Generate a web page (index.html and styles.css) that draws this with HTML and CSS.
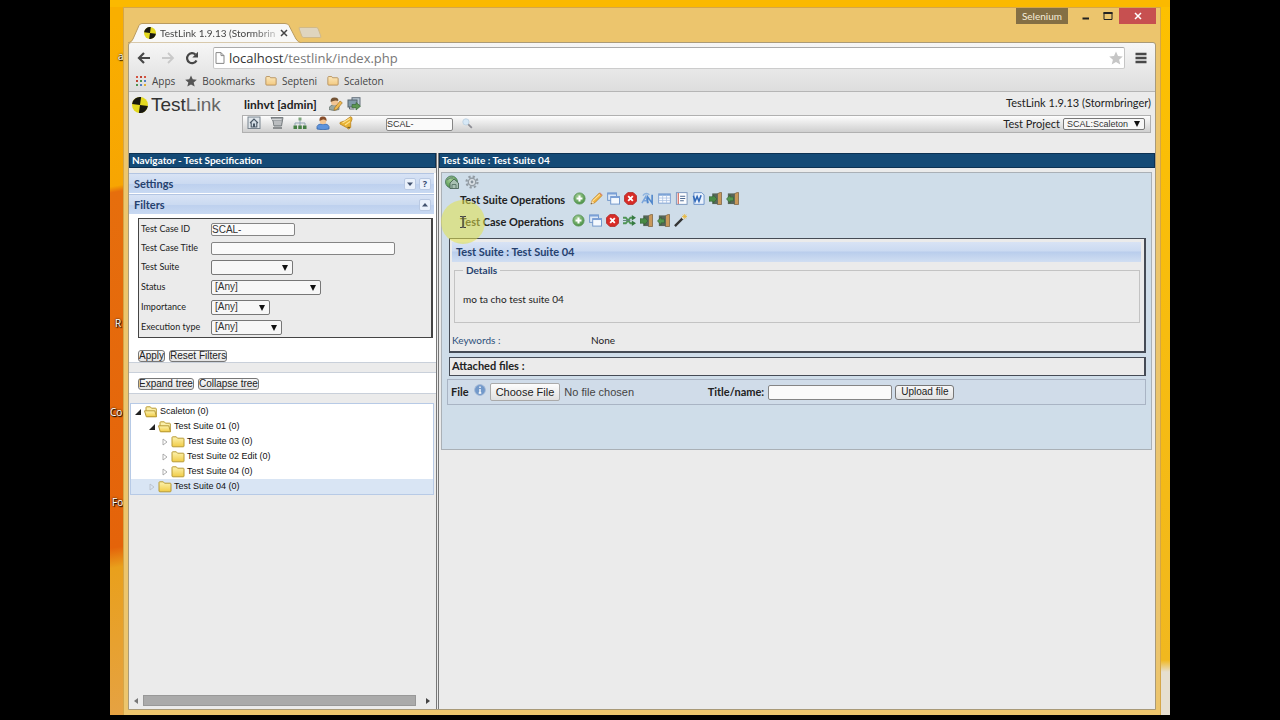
FILE: index.html
```html
<!DOCTYPE html>
<html lang="en">
<head>
<meta charset="utf-8">
<title>TestLink 1.9.13 (Stormbringer)</title>
<link rel="stylesheet" href="styles.css">
</head>
<body>
<svg class="sprite" aria-hidden="true">
  <defs>
    <radialGradient id="g-green" cx=".4" cy=".3" r=".8"><stop offset="0" stop-color="#a5cf98"/><stop offset="1" stop-color="#3f8a3c"/></radialGradient>
    <linearGradient id="g-fold" x1="0" y1="0" x2="0" y2="1"><stop offset="0" stop-color="#fdf3b0"/><stop offset="1" stop-color="#f0cb45"/></linearGradient>
    <linearGradient id="g-book" x1="0" y1="0" x2="0" y2="1"><stop offset="0" stop-color="#fbe7ba"/><stop offset="1" stop-color="#f3c981"/></linearGradient>
  </defs>
  <symbol id="mark" viewBox="0 0 16 16"><circle cx="8" cy="8" r="8" fill="#e3d820"/><path d="M8 8V0A8 8 0 0 0 0 8zM8 8v8a8 8 0 0 0 8-8z" fill="#171710" transform="rotate(8 8 8)"/></symbol>
  <symbol id="add" viewBox="0 0 14 14"><circle cx="7" cy="7" r="6" fill="url(#g-green)" stroke="#5d9658"/><path d="M7 3.800v6.400M3.800 7h6.400" stroke="#fff" stroke-width="2.200"/></symbol>
  <symbol id="pencil" viewBox="0 0 14 14"><path d="M1 13l1.500-4.500L10 1.200l2.800 2.800L5.300 11.500z" fill="#f0b440" stroke="#b97c25" stroke-width=".8"/><path d="M3 9.500L10.600 2.500" stroke="#ffe39a" stroke-width="1.200"/><path d="M1 13l1.200-3.500 2.300 2.300z" fill="#f6dfb8"/><path d="M1 13l.5-1.500 1 1z" fill="#333"/><path d="M10 1.200l1-.7 2.700 2.700-.9.800z" fill="#d98874"/></symbol>
  <symbol id="copy" viewBox="0 0 14 14"><rect x=".7" y="1" width="9.500" height="8" fill="#dce8f7" stroke="#6d94ca"/><path d="M.5 1.800h10" stroke="#7ba0d6" stroke-width="1.800"/><rect x="4" y="5" width="9.500" height="8" fill="#f5f9fe" stroke="#6d94ca"/><path d="M3.800 5.600h10" stroke="#7ba0d6" stroke-width="1.800"/></symbol>
  <symbol id="delete" viewBox="0 0 14 14"><path d="M4 .7h6L13.300 4v6L10 13.300H4L.7 10V4z" fill="#d92c27" stroke="#b0231e"/><path d="M4.500 4.500l5 5m0-5l-5 5" stroke="#fff" stroke-width="2"/></symbol>
  <symbol id="move" viewBox="0 0 14 14"><path d="M1 12l4-7 3 7M2.500 9.500h4" fill="none" stroke="#7aa5dc" stroke-width="1.600"/><path d="M7 12V5l5 7V3" fill="none" stroke="#4f86cb" stroke-width="1.700"/><path d="M2 4c2-3 5-3 7-1" fill="none" stroke="#8db3df" stroke-width="1.500"/></symbol>
  <symbol id="table" viewBox="0 0 14 14"><rect x=".7" y="2" width="12.600" height="10" fill="#f8fbff" stroke="#7c9fcf"/><path d="M.7 3h12.600" stroke="#7ca3d6" stroke-width="2"/><path d="M5 3v9M9.200 3v9M1 6.500h12M1 9.200h12" stroke="#a7c0e2" stroke-width=".8"/></symbol>
  <symbol id="report" viewBox="0 0 14 14"><rect x="1.500" y=".7" width="11.500" height="12.600" fill="#fcfdff" stroke="#7893bb"/><path d="M3.500 1v12" stroke="#d1695e" stroke-width="1.300"/><path d="M5.500 4.500h5.500M5.500 7h5.500M5.500 9.500h4" stroke="#506b92" stroke-width="1.100"/></symbol>
  <symbol id="word" viewBox="0 0 14 14"><path d="M2 .7h8.500L13 3.200v10.100H2z" fill="#eaf2fd" stroke="#6991c8"/><path d="M1.500 4l1.800 6L5.500 5l2 5 2.300-6.500" fill="none" stroke="#3269b8" stroke-width="1.700"/></symbol>
  <symbol id="import" viewBox="0 0 14 14"><path d="M9 2l3-1.500h1.500v13H9z" fill="#c9985a" stroke="#78603f" stroke-width=".8"/><rect x="3.500" y="1.500" width="6" height="11.500" fill="#58655a"/><path d="M0 5h4.500V3l4 4.500-4 4.500v-2H0z" fill="#498a45" stroke="#315d32" stroke-width=".6"/></symbol>
  <symbol id="export" viewBox="0 0 14 14"><path d="M9 2l3-1.500h1.500v13H9z" fill="#c9985a" stroke="#78603f" stroke-width=".8"/><rect x="2" y="1.500" width="7.500" height="11.500" fill="#58655a"/><path d="M8 5.500H4.500V3.200L.5 7.500l4 4.300V9.500H8z" fill="#539750" stroke="#315d32" stroke-width=".6"/></symbol>
  <symbol id="shuffle" viewBox="0 0 14 14"><path d="M0 4h3l5 6h3M0 10h3l5-6h3" fill="none" stroke="#4f9556" stroke-width="2"/><path d="M9.500 1L14 4l-4.500 3zM9.500 7l4.500 3-4.500 3z" fill="#367a42"/><path d="M0 7h8" stroke="#5e7e76"/></symbol>
  <symbol id="wand" viewBox="0 0 14 14"><path d="M1 13L9.500 4.500" stroke="#343434" stroke-width="2.500"/><path d="M9 5l2-2" stroke="#eee" stroke-width="2.200"/><path d="M11.500 0v5.500M8.700 2.700h5.300M9.500.7l4 4m0-4l-4 4" stroke="#e9b83a" stroke-width=".9"/></symbol>
  <symbol id="print" viewBox="0 0 14 14"><circle cx="6.500" cy="7" r="6" fill="url(#g-green)" stroke="#57806a"/><path d="M5 8l4-4 4.500 4v5.500H5z" fill="#a9c1b3" stroke="#3d584b" stroke-width=".8"/><path d="M7 13V9.500h4V13M2 5q3-3 6-2" fill="none" stroke="#607c70"/></symbol>
  <symbol id="gear" viewBox="0 0 14 14"><circle cx="7" cy="7" r="5.500" fill="none" stroke="#929ba3" stroke-width="2.200" stroke-dasharray="2.200 2.120"/><circle cx="7" cy="7" r="3.700" fill="#dbe1e6" stroke="#949da5" stroke-width="1.400"/><circle cx="7" cy="7" r="1.400" fill="#87929c"/></symbol>
  <symbol id="home" viewBox="0 0 14 14"><rect x="1" y="1" width="12" height="11.500" fill="#dfe5ea" stroke="#79848e"/><path d="M3 7l4-4 4 4M4.200 6.500V11h5.600V6.500" fill="#d1dce5" stroke="#4a5866" stroke-width="1.100"/><rect x="6" y="7.500" width="2" height="3.500" fill="#4a5866"/></symbol>
  <symbol id="spec" viewBox="0 0 14 14"><path d="M1 1.500h12L11.500 10H4L3 5z" fill="#a2a6a9" stroke="#7b8083"/><path d="M1.500 3.500h10M4 6h7.500M4 8h7" stroke="#dfe1e2" stroke-width=".8"/><path d="M3 12h9" stroke="#777b7e" stroke-width="1.600"/></symbol>
  <symbol id="tree" viewBox="0 0 14 14"><path d="M7 4v3M2 9.500V7h10v2.500M7 7v3" fill="none" stroke="#91a3b3"/><rect x="5.500" y="1.500" width="3" height="3" fill="#7fa67d"/><path d="M.5 9.500h3.500V13H.5zM5.300 9.500h3.500V13H5.300zM10 9.500h3.500V13H10z" fill="#457f43"/></symbol>
  <symbol id="user" viewBox="0 0 14 14"><path d="M1 13V10.500Q2 8 5 8h4q3 0 4 2.500V13q-6 1.500-12 0z" fill="#5d93dc" stroke="#3565aa" stroke-width=".8"/><circle cx="7" cy="5" r="3.300" fill="#f3c592"/><path d="M3.500 5Q3 .5 7 .6t3.500 4.400Q9 3 7 3.500T3.500 5z" fill="#874d2b"/></symbol>
  <symbol id="broom" viewBox="0 0 14 14"><path d="M11.500.7Q13.500 1 13 3.500l-1.300 3v5L9.500 13l-2-1.500L1 8V6.500L5.500 5z" fill="#e8b233" stroke="#b98322" stroke-width=".8"/><path d="M3.500 7L11 2.500M6 9l5-3.500" stroke="#ffe28d" stroke-width="1.200"/><path d="M8.500 11.500h2.500" stroke="#80601f" stroke-width="1.300"/></symbol>
  <symbol id="profile" viewBox="0 0 14 14"><path d="M0 12q1-5 6-4l4 1v3.500q-5 2-10 0z" fill="#9aa8a0" stroke="#636f68" stroke-width=".7"/><circle cx="5.500" cy="5" r="3.500" fill="#f2c593"/><path d="M1.700 5Q1 .5 5.500.5T9.300 4Q6 2.500 1.700 5z" fill="#745436"/><path d="M5.500 11l5.500-7 2.300 1.800-5.500 6.700-2.800.8z" fill="#efb94e" stroke="#a57326" stroke-width=".7"/></symbol>
  <symbol id="logout" viewBox="0 0 14 14"><rect x="5" y=".7" width="8" height="7.500" fill="#b7c6d1" stroke="#65717c"/><rect x="1" y="3" width="9" height="7" fill="#829bab" stroke="#54636c"/><path d="M2.500 10v2h5" fill="none" stroke="#5e6b74"/><path d="M5 7.500h4V5.500l4.500 3.700L9 13v-2.300H5z" fill="#5c9751" stroke="#39683a" stroke-width=".7"/></symbol>
  <symbol id="lens" viewBox="0 0 14 14"><circle cx="5" cy="5" r="4" fill="#d7e8f6" stroke="#bacedf"/><path d="M8 8l4.500 4.500" stroke="#8d8d94" stroke-width="2.200"/></symbol>
  <symbol id="info" viewBox="0 0 14 14"><circle cx="7" cy="7" r="6.300" fill="#7299ca" stroke="#a4b9d6"/><path d="M7 3v1.600M7 5.800v4.700M5.500 10.500h3" stroke="#fff" stroke-width="1.600"/></symbol>
  <symbol id="folder" viewBox="0 0 14 12"><path d="M1 3V1.500Q1 .8 1.800.8h3.500L6.500 2.200h5.700q.8 0 .8.800v7q0 .8-.8.800H2Q1 10.800 1 10z" fill="url(#g-fold)" stroke="#b89a35"/></symbol>
  <symbol id="folder-open" viewBox="0 0 14 12"><path d="M2 8V1.500Q2 .8 2.800.8h3.500L7.500 2.200h4q.8 0 .8.800v7.500H3z" fill="#fbefaa" stroke="#b89a35"/><path d="M.5 4.800h10.300l1.700 6H2.300z" fill="url(#g-fold)" stroke="#b89a35"/></symbol>
  <symbol id="bm-folder" viewBox="0 0 14 12"><path d="M1 2Q1 .8 2 .8h3.500l1 1.400H12q1 0 1 1v6.600q0 1-1 1H2q-1 0-1-1z" fill="url(#g-book)" stroke="#b28b55"/></symbol>
  <symbol id="star" viewBox="0 0 14 14"><path d="M7 .5l2 4.600 4.800.4-3.700 3.200 1.200 4.800L7 11l-4.300 2.500 1.200-4.800L.2 5.500 5 5.100z"/></symbol>
</svg>

<div class="desktop">
  <div class="desk-icons" aria-hidden="true">
    <span class="d1">a</span><span class="d2">R</span><span class="d3">Co</span><span class="d4">Fo</span>
  </div>
  <div class="window">
    <div class="titlebar">
      <div class="tab">
        <svg class="tab-shape" viewBox="0 0 174 20" preserveAspectRatio="none"><path d="M0 20Q4 19 5 16L11 2.500Q12 .5 14 .5H157Q160 .5 161 2.500L168 16Q170 19.500 174 20z" fill="#f8f8f7" stroke="#b99b60"/></svg>
        <svg class="i12"><use href="#mark"/></svg>
        <span class="tab-title">TestLink 1.9.13 (Stormbrin</span>
        <button class="plain close" aria-label="Close tab"><svg viewBox="0 0 8 8"><path d="M1 1l6 6m0-6L1 7" stroke="#444" stroke-width="1.500"/></svg></button>
      </div>
      <button class="plain newtab" aria-label="New tab"></button>
      <div class="controls">
        <button class="plain profile">Selenium</button>
        <button class="plain ctl" aria-label="Minimize"><svg viewBox="0 0 10 10"><path d="M1.500 7.500h6.500" stroke="#222" stroke-width="2"/></svg></button>
        <button class="plain ctl" aria-label="Maximize"><svg viewBox="0 0 10 10"><path d="M1 1.500h8v7H1z" fill="none" stroke="#222"/><path d="M.5 2h9" stroke="#222" stroke-width="2"/></svg></button>
        <button class="plain ctl exit" aria-label="Close"><svg viewBox="0 0 10 10"><path d="M2 2l6 6m0-6L2 8" stroke="#fff" stroke-width="1.500"/></svg></button>
      </div>
    </div>

    <div class="browser">
      <div class="addressbar">
        <button class="plain nav" aria-label="Back"><svg viewBox="0 0 14 14"><path d="M13 7H2.500M7 2L2 7l5 5" fill="none" stroke="#474747" stroke-width="2.200"/></svg></button>
        <button class="plain nav" aria-label="Forward"><svg viewBox="0 0 14 14"><path d="M1 7h10.500M7 2l5 5-5 5" fill="none" stroke="#c9c9c9" stroke-width="1.800"/></svg></button>
        <button class="plain nav" aria-label="Reload"><svg viewBox="0 0 14 14"><path d="M11.500 9.500A5 5 0 1 1 10.500 3.500" fill="none" stroke="#474747" stroke-width="2.200"/><path d="M13 .8v5.700H7.300z" fill="#474747"/></svg></button>
        <div class="url">
          <svg class="i12" viewBox="0 0 12 12"><path d="M2 .6h5l3 3v7.800H2zM7 .6v3h3" fill="#fff" stroke="#888"/></svg>
          <span class="url-text">localhost<span>/testlink/index.php</span></span>
          <button class="plain fav" aria-label="Bookmark"><svg fill="#c6c6c6"><use href="#star"/></svg></button>
        </div>
        <button class="plain menu" aria-label="Menu"><svg viewBox="0 0 12 12"><path d="M.5 2h11M.5 6h11M.5 10h11" stroke="#484848" stroke-width="2.400"/></svg></button>
      </div>
      <nav class="bookmarks">
        <a href="#"><svg class="i12" viewBox="0 0 12 12"><g><path d="M1 1h2v2H1zM9 1h2v2H9z" fill="#d5523f"/><path d="M5 1h2v2H5zM1 5h2v2H1z" fill="#bd4433"/><path d="M5 5h2v2H5zM1 9h2v2H1z" fill="#4f9350"/><path d="M9 5h2v2H9zM5 9h2v2H5z" fill="#527dc6"/><path d="M9 9h2v2H9z" fill="#dfae33"/></g></svg>Apps</a>
        <a href="#"><svg class="i12" fill="#555"><use href="#star"/></svg>Bookmarks</a>
        <a href="#"><svg class="i12"><use href="#bm-folder"/></svg>Septeni</a>
        <a href="#"><svg class="i12"><use href="#bm-folder"/></svg>Scaleton</a>
      </nav>

      <div class="page">
        <header class="top">
          <a class="logo" href="#"><svg><use href="#mark"/></svg><span>Test<i>Link</i></span></a>
          <div class="top-main">
            <div class="userline">
              <b>linhvt [admin]</b>
              <button class="plain ico" aria-label="My settings"><svg><use href="#profile"/></svg></button>
              <button class="plain ico" aria-label="Logout"><svg><use href="#logout"/></svg></button>
              <span class="version">TestLink 1.9.13 (Stormbringer)</span>
            </div>
            <div class="menubar">
              <button class="plain ico" aria-label="Home"><svg><use href="#home"/></svg></button>
              <button class="plain ico" aria-label="Specification"><svg><use href="#spec"/></svg></button>
              <button class="plain ico" aria-label="Execute"><svg><use href="#tree"/></svg></button>
              <button class="plain ico" aria-label="Users"><svg><use href="#user"/></svg></button>
              <button class="plain ico" aria-label="Events"><svg><use href="#broom"/></svg></button>
              <input class="field jump" type="text" value="SCAL-" aria-label="Go to test case">
              <button class="plain ico find" aria-label="Search"><svg><use href="#lens"/></svg></button>
              <label class="project-label" for="project">Test Project</label>
              <span class="drop project"><select id="project"><option>SCAL:Scaleton</option></select></span>
            </div>
          </div>
        </header>

        <div class="frames">
          <aside class="left">
            <h1 class="frame-title">Navigator - Test Specification</h1>
            <div class="nav-panels">
              <div class="bar"><h2>Settings</h2><button class="tool" aria-label="Expand settings"><svg viewBox="0 0 8 8"><path d="M1 2.500h6L4 6z" fill="#42526f"/></svg></button><button class="tool" aria-label="Help">?</button></div>
              <div class="bar"><h2>Filters</h2><button class="tool" aria-label="Collapse filters"><svg viewBox="0 0 8 8"><path d="M1 5.500h6L4 2z" fill="#42526f"/></svg></button></div>
              <form class="filters" onsubmit="return false">
                <div class="filter-grid">
                  <label for="tcid">Test Case ID</label><input id="tcid" class="field w-id" type="text" value="SCAL-">
                  <label for="tctitle">Test Case Title</label><input id="tctitle" class="field w-title" type="text">
                  <label for="suite">Test Suite</label><span class="drop w-suite"><select id="suite"><option></option></select></span>
                  <label for="status">Status</label><span class="drop w-status"><select id="status"><option>[Any]</option></select></span>
                  <label for="imp">Importance</label><span class="drop w-imp"><select id="imp"><option>[Any]</option></select></span>
                  <label for="exec">Execution type</label><span class="drop w-exec"><select id="exec"><option>[Any]</option></select></span>
                </div>
                <div class="btns"><button class="btn">Apply</button><button class="btn">Reset Filters</button></div>
              </form>
            </div>
            <div class="treebtns btns"><button class="btn">Expand tree</button><button class="btn">Collapse tree</button></div>
            <ul class="treelist">
              <li class="l0"><svg class="arrow" viewBox="0 0 8 8"><path d="M7 1v6H1z" fill="#222"/></svg><svg class="fold"><use href="#folder-open"/></svg>Scaleton (0)</li>
              <li class="l1"><svg class="arrow" viewBox="0 0 8 8"><path d="M7 1v6H1z" fill="#222"/></svg><svg class="fold"><use href="#folder-open"/></svg>Test Suite 01 (0)</li>
              <li class="l2"><svg class="arrow" viewBox="0 0 8 8"><path d="M2 1l4 3-4 3z" fill="none" stroke="#999" stroke-width=".8"/></svg><svg class="fold"><use href="#folder"/></svg>Test Suite 03 (0)</li>
              <li class="l2"><svg class="arrow" viewBox="0 0 8 8"><path d="M2 1l4 3-4 3z" fill="none" stroke="#999" stroke-width=".8"/></svg><svg class="fold"><use href="#folder"/></svg>Test Suite 02 Edit (0)</li>
              <li class="l2"><svg class="arrow" viewBox="0 0 8 8"><path d="M2 1l4 3-4 3z" fill="none" stroke="#999" stroke-width=".8"/></svg><svg class="fold"><use href="#folder"/></svg>Test Suite 04 (0)</li>
              <li class="l1 selected"><svg class="arrow" viewBox="0 0 8 8"><path d="M2 1l4 3-4 3z" fill="none" stroke="#b5bcc6" stroke-width=".8"/></svg><svg class="fold"><use href="#folder"/></svg>Test Suite 04 (0)</li>
            </ul>
            <div class="hscroll"><svg viewBox="0 0 8 8"><path d="M6 1v6L2 4z" fill="#777"/></svg><div class="thumb"></div><svg viewBox="0 0 8 8"><path d="M2 1v6l4-3z" fill="#444"/></svg></div>
          </aside>

          <main class="right">
            <h1 class="frame-title">Test Suite : Test Suite 04</h1>
            <div class="work">
              <div class="quick">
                <button class="plain ico" aria-label="Print view"><svg><use href="#print"/></svg></button>
                <button class="plain ico" aria-label="Actions"><svg><use href="#gear"/></svg></button>
              </div>
              <div class="ops">
                <b>Test Suite Operations</b>
                <button class="plain ico" aria-label="Create"><svg><use href="#add"/></svg></button>
                <button class="plain ico" aria-label="Edit"><svg><use href="#pencil"/></svg></button>
                <button class="plain ico" aria-label="Move or copy"><svg><use href="#copy"/></svg></button>
                <button class="plain ico" aria-label="Delete"><svg><use href="#delete"/></svg></button>
                <button class="plain ico" aria-label="Reorder"><svg><use href="#move"/></svg></button>
                <button class="plain ico" aria-label="Table"><svg><use href="#table"/></svg></button>
                <button class="plain ico" aria-label="Report"><svg><use href="#report"/></svg></button>
                <button class="plain ico" aria-label="Word document"><svg><use href="#word"/></svg></button>
                <button class="plain ico" aria-label="Import"><svg><use href="#import"/></svg></button>
                <button class="plain ico" aria-label="Export"><svg><use href="#export"/></svg></button>
              </div>
              <div class="ops">
                <b>Test Case Operations</b>
                <button class="plain ico" aria-label="Create"><svg><use href="#add"/></svg></button>
                <button class="plain ico" aria-label="Move or copy"><svg><use href="#copy"/></svg></button>
                <button class="plain ico" aria-label="Delete"><svg><use href="#delete"/></svg></button>
                <button class="plain ico" aria-label="Reorder"><svg><use href="#shuffle"/></svg></button>
                <button class="plain ico" aria-label="Import"><svg><use href="#import"/></svg></button>
                <button class="plain ico" aria-label="Export"><svg><use href="#export"/></svg></button>
                <button class="plain ico" aria-label="Create from issue"><svg><use href="#wand"/></svg></button>
                <span class="pointer"><svg viewBox="0 0 8 14"><path d="M1 1.500h2l1 1 1-1h2M4 2v10M1 12.500h2l1-1 1 1h2" fill="none" stroke="#444" stroke-width="1.200"/></svg></span>
              </div>

              <section class="info">
                <h2>Test Suite : Test Suite 04</h2>
                <fieldset><legend>Details</legend><p>mo ta cho test suite 04</p></fieldset>
                <div class="keywords"><a href="#">Keywords :</a><span>None</span></div>
              </section>
              <div class="attached">Attached files :</div>
              <form class="upload" onsubmit="return false">
                <label for="file">File</label>
                <svg class="i12"><use href="#info"/></svg>
                <input id="file" type="file">
                <label for="ftitle">Title/name:</label>
                <input id="ftitle" class="field" type="text">
                <button class="btn big">Upload file</button>
              </form>
            </div>
          </main>
        </div>
      </div>
    </div>
  </div>
</div>
</body>
</html>
```
FILE: styles.css
```css
* { box-sizing: border-box; }
body { margin: 0; min-height: 100vh; background: #000; display: flex; color: #222; font: 11px/14px Lato, "Open Sans", sans-serif; }
h1, h2, p, ul, fieldset { margin: 0; padding: 0; }
svg { display: block; }
a { color: inherit; text-decoration: none; }
.sprite { position: absolute; width: 0; height: 0; }
.i12 { width: 12px; height: 12px; flex: none; }
.plain { border: 0; background: none; padding: 0; margin: 0; font: inherit; color: inherit; display: block; flex: none; }
.ico svg { width: 14px; height: 14px; }

.desktop {
  position: relative; flex: 1; margin: 0 110px 5px; padding: 7px 9px 0 13px; display: flex;
  background:
    linear-gradient(#fbb900, #fbb900) 0 0 / 100% 7px no-repeat,
    linear-gradient(170deg, #f9af00 0 24px, #f7a502 184px, #e66e0d 190px, #e4630a 540px, #e9a01c 560px, #e5a243 100%) 0 0 / 20px 100% no-repeat,
    linear-gradient(#fdc000, #f1b81f 660px, #e6dfd0 672px) 100% 0 / 20px 100% no-repeat #fbb900;
}
.desk-icons { position: absolute; inset: 0 auto 0 0; width: 13px; overflow: hidden; color: #fff; font: 10px/12px "Open Sans", sans-serif; text-shadow: 1px 1px 1px #000, 0 0 2px #000; }
.desk-icons span { position: absolute; left: 0; }
.desk-icons .d1 { top: 50px; left: 8px; }
.desk-icons .d2 { top: 317px; left: 5px; }
.desk-icons .d3 { top: 406px; left: 0; }
.desk-icons .d4 { top: 496px; left: 2px; }

.window { position: relative; flex: 1; min-width: 0; display: flex; flex-direction: column; background: #ecc56d; border: 1px solid #d5a648; border-bottom: 0; padding: 0 4px 5px 4px; }
.titlebar { height: 35px; display: flex; align-items: flex-end; font: 10px/14px "Open Sans", sans-serif; }
.tab { position: relative; width: 174px; height: 20px; padding: 0 14px 0 16px; display: flex; align-items: center; gap: 4px; color: #444; }
.tab-shape { position: absolute; inset: 0; width: 100%; height: 100%; }
.tab > * + * { position: relative; }
.tab-title { flex: 1; font-family: Lato, sans-serif; white-space: nowrap; mask-image: linear-gradient(90deg, #000 80%, #0004); }
.close svg { width: 8px; height: 8px; }
.newtab { width: 20px; height: 11px; margin: 0 0 5px -2px; background: #dfd5bf; border: 1px solid #d0b989; border-radius: 2px; transform: skewX(20deg); }
.controls { margin-left: auto; align-self: flex-start; display: flex; }
.profile { width: 52px; height: 16px; margin-right: 7px; background: #846f44; color: #f5edda; font-family: Lato, sans-serif; }
.ctl { width: 22px; height: 16px; display: grid; place-items: center; }
.ctl svg { width: 10px; height: 10px; }
.exit { width: 37px; background: #c75050; }

.browser { flex: 1; display: flex; flex-direction: column; min-height: 0; border: 1px solid #a99a78; border-radius: 3px 3px 0 0; background: linear-gradient(#f6f6f6, #dcdcdc 50px); margin-top: -1px; }
.addressbar { height: 28px; display: flex; align-items: center; padding: 2px 8px 0 8px; }
.nav { width: 24px; }
.nav svg { width: 14px; height: 14px; }
.url { flex: 1; height: 22px; display: flex; align-items: center; gap: 3px; padding: 0 1px 0 0; background: #fff; border: 1px solid #bbb; border-color: #aaa #c5c5c5 #ccc; border-radius: 2px; margin-left: 4px; }
.url-text { flex: 1; font: 13px/18px "Open Sans", sans-serif; color: #333; }
.url-text span { color: #777; }
.fav svg { width: 14px; height: 14px; }
.menu { margin-left: 10px; }
.menu svg { width: 12px; height: 12px; }
.bookmarks { height: 21px; display: flex; align-items: center; gap: 10px; padding: 0 6px; font: 10px/14px "Open Sans", sans-serif; color: #444; border-bottom: 1px solid #b5b5b5; }
.bookmarks a { display: flex; align-items: center; gap: 5px; }

.page { flex: 1; display: flex; flex-direction: column; min-height: 0; background: #ebebeb; }
.top { height: 61px; display: flex; padding: 2px 4px 0 3px; }
.logo { width: 110px; display: flex; gap: 3px; height: 22px; align-items: center; font: 19px/20px "Liberation Sans", Arial, sans-serif; color: #333; }
.logo svg { width: 16px; height: 16px; }
.logo i { font-style: normal; color: #666; }
.top-main { flex: 1; }
.userline { height: 21px; display: flex; align-items: center; gap: 4px; padding-left: 2px; }
.userline b { margin-right: 8px; font-size: 12px; }
.userline .ico { margin-bottom: 2px; }
.version { margin: 0 0 4px auto; }
.menubar { height: 18px; display: flex; align-items: center; gap: 9px; padding: 0 5px 0 4px; border: 1px solid #b0b0b0; background: linear-gradient(#fdfdfd, #cfcfcf); }
.menubar .ico { margin-bottom: 2px; }
.field { height: 13px; min-width: 0; border: 1px solid #858585; border-radius: 2px; background: #fafafa; padding: 0; margin: 0; font: 10px/11px "Liberation Sans", Arial, sans-serif; color: #333; }
.jump { width: 67px; margin-left: 24px; font-size: 9px; }
.find svg { width: 11px; height: 11px; }
.project-label { margin-left: auto; }
.drop { position: relative; display: block; height: 15px; }
.drop select { appearance: none; display: block; width: 100%; height: 100%; margin: 0; padding: 0 14px 0 3px; border: 1px solid #777; border-radius: 2px; background: #f7f7f7; font: 10px/12px "Liberation Sans", Arial, sans-serif; color: #333; }
.drop::after { content: ""; position: absolute; right: 5px; top: 5px; border: 3px solid transparent; border-top: 6px solid #111; border-bottom: 0; }
.project { width: 82px; height: 12px; margin-left: -6px; }
.project select { font-size: 9px; line-height: 10px; }
.project::after { top: 3px; }

.frames { flex: 1; display: flex; min-height: 0; }
.left { width: 310px; flex: none; display: flex; flex-direction: column; border-right: 3px double #777; }
.right { flex: 1; min-width: 0; }
.frame-title { height: 15px; padding: 0 2px; background: #144a76; border: 1px solid #0c3152; color: #fff; font: bold 10px/13px Lato, sans-serif; }
.nav-panels { margin-top: 5px; background: #fff; border-bottom: 1px solid #c9d0da; }
.bar { height: 20px; margin: 0 2px 1px 0; display: flex; align-items: center; gap: 3px; padding: 0 3px 0 5px; background: linear-gradient(#d8e3f5, #cbdaf1 50%, #bdd0ee 52%, #c8d9f2); border-top: 1px solid #b3c5e2; }
.bar h2, .info h2 { font: bold 11px/14px Lato, sans-serif; color: #26416e; }
.bar h2 { flex: 1; }
.tool { width: 12px; height: 12px; padding: 0; border: 1px solid #b9c9e3; border-radius: 2px; background: #eaf1fb; color: #35496e; font: bold 9px/10px "Open Sans", sans-serif; display: grid; place-items: center; }
.tool svg { width: 8px; height: 8px; }
.filters { padding: 3px 3px 0 9px; }
.filter-grid { display: grid; grid-template-columns: 70px 1fr; grid-template-rows: 20px 18px repeat(4, 20px); align-items: center; padding-left: 2px; border: 1px solid #444; border-right-width: 2px; background: #ebebeb; font-size: 9px; }
.w-id { width: 84px; }
.w-title { width: 184px; }
.w-suite { width: 82px; }
.w-status { width: 110px; }
.w-imp { width: 59px; }
.w-exec { width: 71px; }
.btns { display: flex; gap: 4px; }
.filters .btns { margin-top: 12px; }
.btn { height: 12px; padding: 0; border: 1px solid #777; border-radius: 3px; background: linear-gradient(#f8f8f8, #e2e2e2); font: 10px/10px "Liberation Sans", Arial, sans-serif; color: #222; white-space: nowrap; }
.treebtns { margin-top: 9px; padding: 5px 9px; height: 22px; background: #fff; border: solid #c9d0da; border-width: 1px 0; }
.treelist { list-style: none; margin: 9px 2px 0 1px; background: #fff; border: 1px solid #b7cae6; font: 9px/15px "Liberation Sans", Arial, sans-serif; color: #111; }
.treelist li { display: flex; align-items: center; height: 15px; }
.arrow { width: 8px; height: 8px; margin-right: 2px; }
.fold { width: 14px; height: 12px; margin-right: 2px; }
.l0 { padding-left: 3px; }
.l1 { padding-left: 17px; }
.l2 { padding-left: 30px; }
.selected { background: #d9e5f4; }
.hscroll { margin-top: auto; height: 17px; display: flex; align-items: center; gap: 3px; padding: 0 4px 0 3px; }
.hscroll svg { width: 8px; height: 8px; flex: none; }
.thumb { flex: none; width: 91%; height: 11px; background: #aaa; border: 1px solid #989898; }
.hscroll svg:last-child { margin-left: auto; }

.work { margin: 4px 3px 0 2px; padding: 2px 5px 44px; border: 1px solid #aab0b6; background: #cfdde9; }
.quick { display: flex; gap: 6px; height: 14px; margin-left: -2px; }
.ops { display: flex; gap: 4px; height: 22px; align-items: center; padding-left: 13px; position: relative; }
.ops b { margin-right: 4px; line-height: 16px; }
.ops .ico { margin-bottom: 4px; }
.ops .ico svg { width: 13px; height: 13px; }
.pointer { position: absolute; left: -6px; top: -11px; width: 44px; height: 44px; border-radius: 50%; background: #e2e24a8c; display: grid; place-items: center; pointer-events: none; }
.pointer svg { width: 8px; height: 14px; }
.info { margin: 5px 0 0 2px; padding: 3px 3px 4px 2px; border: 1px solid #454b55; border-right-width: 2px; border-bottom-width: 2px; background: #ebebeb; }
.info h2 { height: 20px; padding: 3px 4px; background: linear-gradient(#d8e3f5, #cbdaf1 45%, #b9cdec 50%, #d0def2); }
.info fieldset { min-width: 0; min-height: 60px; margin: 1px 1px 0 2px; padding: 0 8px; border: 1px solid #c3c3c3; font-size: 10px; }
.info legend { padding: 0 3px; font-weight: bold; color: #26416e; }
.info p { padding-top: 15px; }
.keywords { display: grid; grid-template-columns: 139px 1fr; margin-top: 10px; font-size: 10px; }
.keywords a { color: #2b4f7a; }
.attached { margin: 4px 0 0 2px; padding: 1px 2px; height: 19px; font-weight: bold; border: 1px solid #454b55; border-right-width: 2px; background: #ebebeb; }
.upload { display: flex; align-items: center; height: 26px; margin-top: 3px; padding: 0 3px; border: 1px solid #a9b4c4; background: #d0dce9; }
.upload label { font-weight: bold; }
.upload .i12 { margin: 0 4px 4px 5px; }
.upload input[type=file] { width: 218px; font: 11px/14px "Liberation Sans", Arial, sans-serif; color: #444; }
.upload input::file-selector-button { height: 18px; margin: 0 4px 0 0; padding: 0 5px; border: 1px solid #aaa; border-radius: 2px; background: linear-gradient(#fdfdfd, #e0e0e0); font: 11px/14px "Liberation Sans", Arial, sans-serif; color: #222; }
.upload .field { width: 124px; height: 15px; margin: 0 3px 0 4px; }
.btn.big { height: 15px; padding: 0 5px; }
```
